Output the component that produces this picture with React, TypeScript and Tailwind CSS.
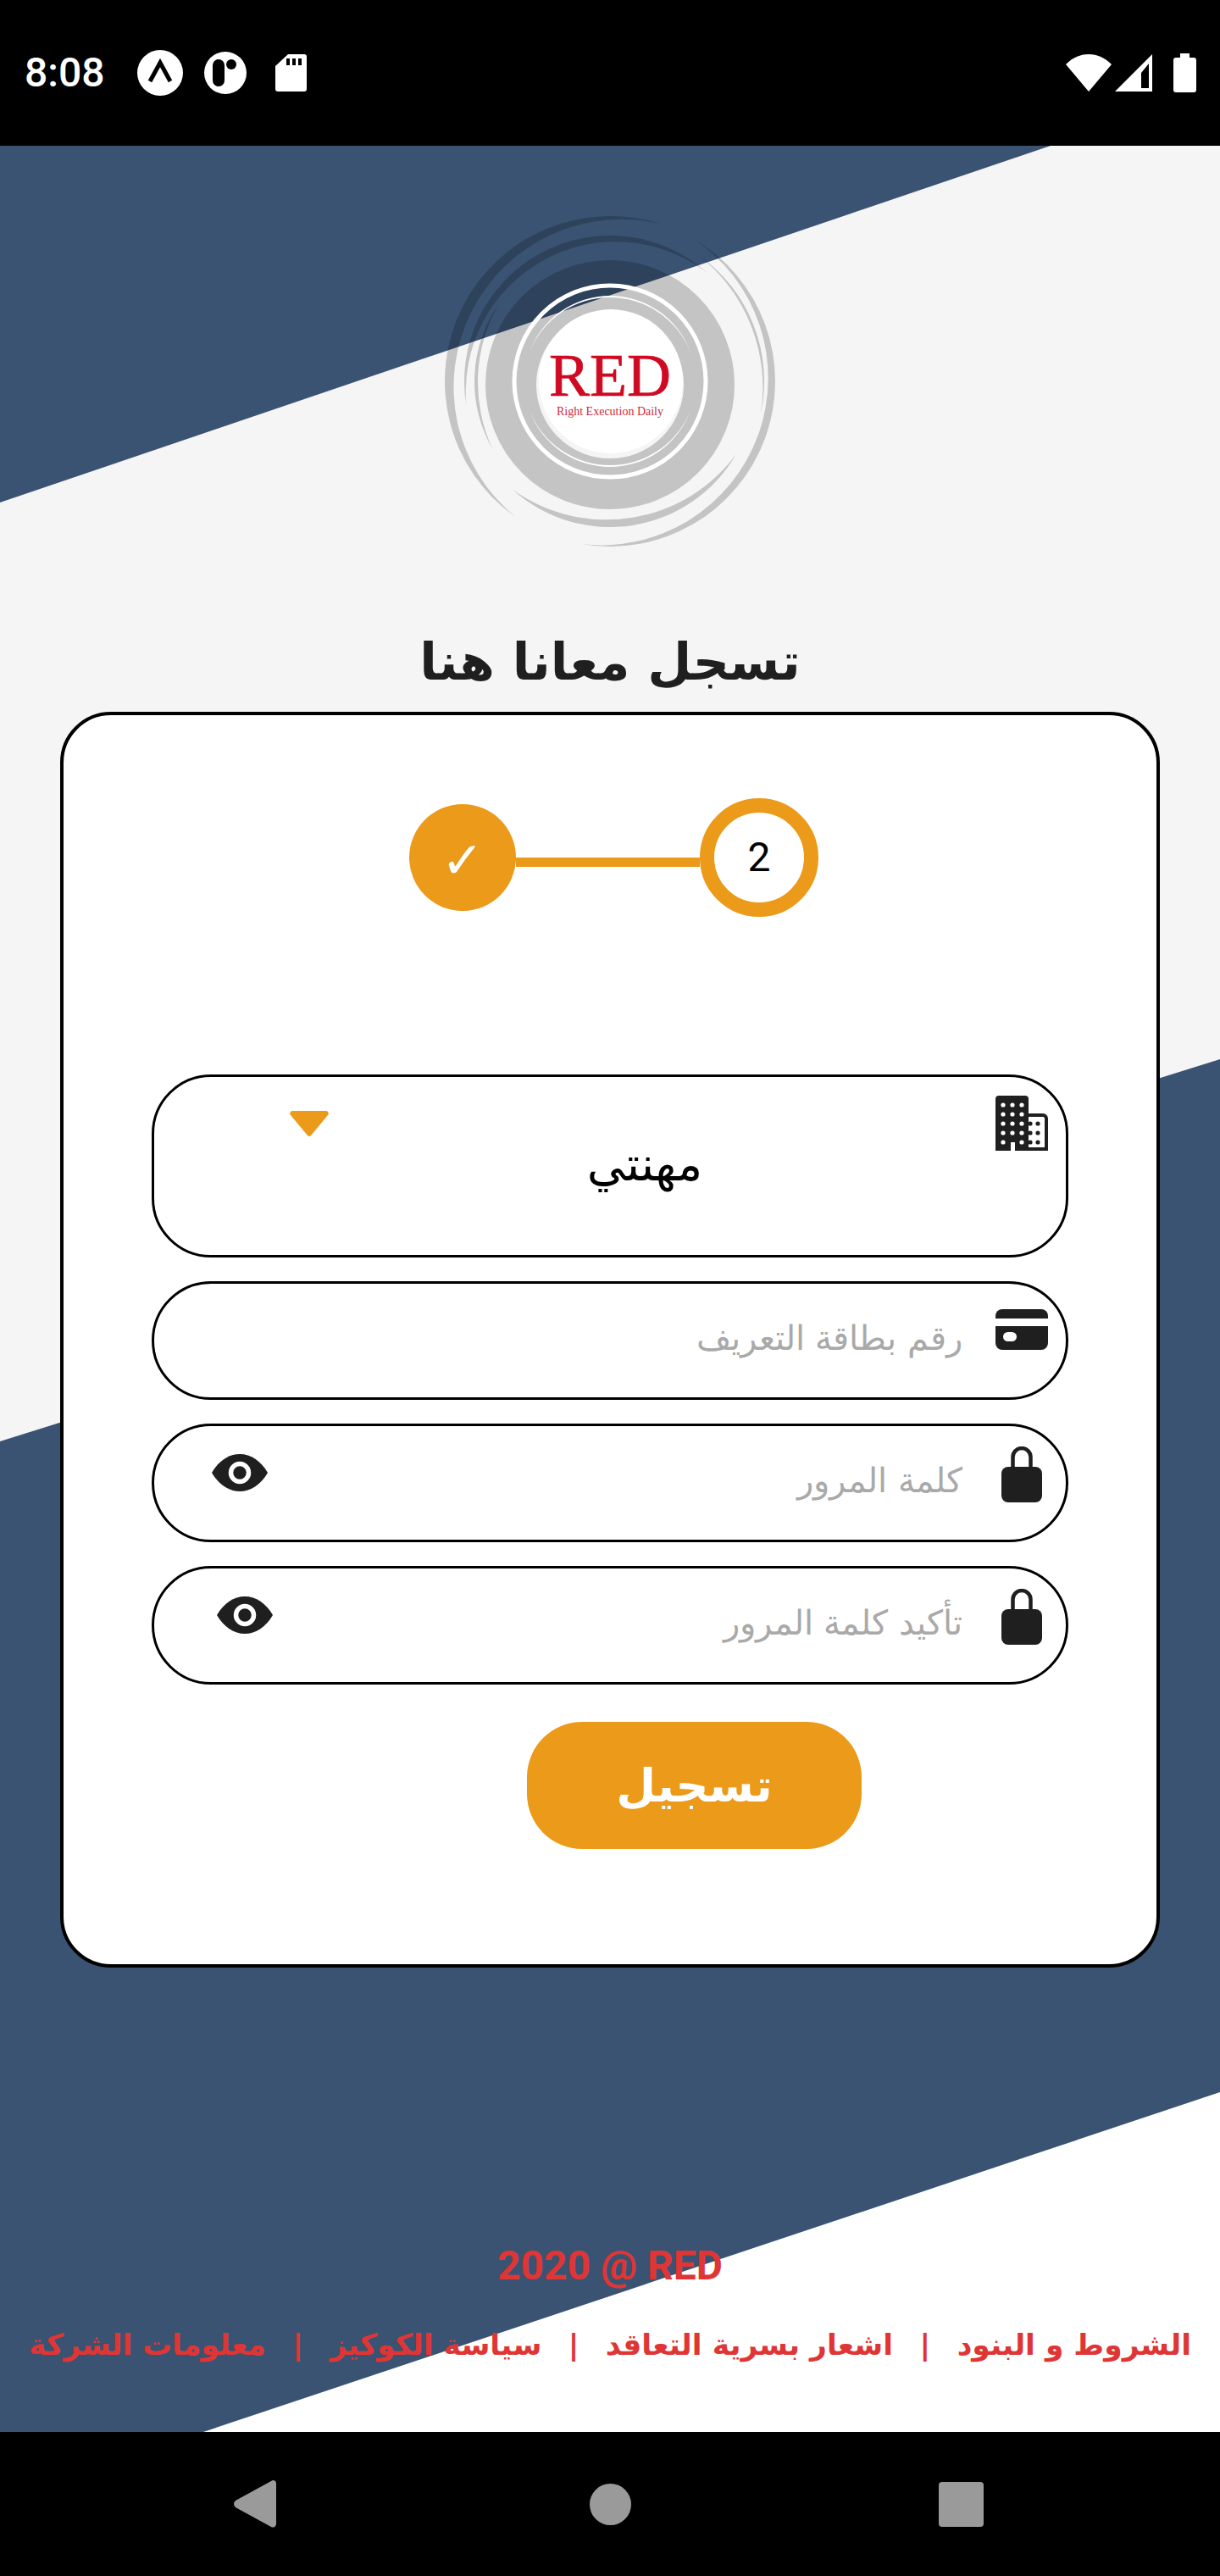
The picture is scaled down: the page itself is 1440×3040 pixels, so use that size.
import React from "react";

const arabic = "font-['DejaVu_Sans',sans-serif]";

// tapered swirl: outer arc of radius r, coming back on a flatter arc
function crescent(r: number, from: number, to: number, w: number) {
  const rad = (d: number) => (d * Math.PI) / 180;
  const cx = 200;
  const cy = 200;
  const x0 = cx + r * Math.cos(rad(from));
  const y0 = cy + r * Math.sin(rad(from));
  const x1 = cx + r * Math.cos(rad(to));
  const y1 = cy + r * Math.sin(rad(to));
  const half = rad(to - from) / 2;
  const c = r * Math.abs(Math.sin(half));
  const s = r * (1 - Math.cos(half)) - w;
  const back = (c * c + s * s) / (2 * s);
  const large = to - from > 180 ? 1 : 0;
  const backLarge = s > back ? 1 : 0;
  return `M${x0} ${y0}A${r} ${r} 0 ${large} 1 ${x1} ${y1}A${back} ${back} 0 ${backLarge} 0 ${x0} ${y0}z`;
}

function Logo() {
  const swirls: [number, number, number, number][] = [
    [195, 125, 288, 12],
    [195, 300, 460, 9],
    [172, 30, 132, 9],
    [172, 170, 312, 9],
    [182, 305, 372, 3],
    [160, 150, 215, 4],
  ];
  return (
    <svg width="400" height="400" viewBox="0 0 400 400" className="block shrink-0">
      <g fill="#000" fillOpacity="0.2">
        {swirls.map(([r, a, b, w], i) => (
          <path key={i} d={crescent(r, a, b, w)} />
        ))}
      </g>
      <circle cx="200" cy="204" r="117" fill="none" stroke="#000" strokeOpacity="0.2" strokeWidth="60" />
      <circle cx="200" cy="200" r="113" fill="none" stroke="#fff" strokeWidth="5" />
      <path d={crescent(101, 200, 340, 2)} fill="#fff" />
      <path d={crescent(101, 20, 160, 2)} fill="#fff" />
      <circle cx="201" cy="200" r="85" fill="#fff" />
      <text x="200" y="217" textAnchor="middle" fill="#cf0a22" stroke="#cf0a22" strokeWidth="0.7" fontFamily="'Liberation Serif', serif" fontSize="72">
        RED
      </text>
      <text x="200" y="240" textAnchor="middle" fill="#cf2a40" fontFamily="'Liberation Serif', serif" fontSize="14">
        Right Execution Daily
      </text>
    </svg>
  );
}

function Eye() {
  return (
    <svg width="66" height="44" viewBox="0 0 66 44">
      <path d="M0 22C8 8 20 0 33 0s25 8 33 22c-8 14-20 22-33 22S8 36 0 22z" fill="#1f1f1f" />
      <circle cx="33" cy="22" r="10.5" fill="none" stroke="#fff" strokeWidth="5.5" />
    </svg>
  );
}

function Lock() {
  return (
    <svg width="48" height="66" viewBox="0 0 48 66">
      <path d="M13.5 26V12.500a10.500 10.500 0 0 1 21 0V26" fill="none" stroke="#1f1f1f" strokeWidth="4.500" />
      <rect x="0" y="24" width="48" height="42" rx="8" fill="#1f1f1f" />
    </svg>
  );
}

function Card() {
  return (
    <svg width="62" height="48" viewBox="0 0 62 48">
      <path d="M8 0h46a8 8 0 0 1 8 8v3H0V8a8 8 0 0 1 8-8z" fill="#1f1f1f" />
      <path fillRule="evenodd" d="M0 20h62v20a8 8 0 0 1-8 8H8a8 8 0 0 1-8-8zM14.500 27a5.500 5.500 0 0 0 0 11h5a5.500 5.500 0 0 0 0-11z" fill="#1f1f1f" />
    </svg>
  );
}

function Building() {
  const dots: [number, number][] = [];
  for (const y of [11, 22, 33, 44, 55]) {
    for (const x of [9, 20, 31]) {
      if (!(y === 55 && x === 20)) dots.push([x, y]);
    }
  }
  const small: [number, number][] = [];
  for (const y of [33, 44, 55]) {
    for (const x of [41, 50]) small.push([x, y]);
  }
  return (
    <svg width="62" height="66" viewBox="0 0 62 66">
      <path d="M4 0h31a4 4 0 0 1 4 4v61H23V55h-5v10H0V4a4 4 0 0 1 4-4z" fill="#1f1f1f" />
      <path d="M39 23h17a4 4 0 0 1 4 4v36H39" fill="#fff" stroke="#1f1f1f" strokeWidth="4" />
      {dots.map(([x, y]) => (
        <circle key={`${x}-${y}`} cx={x} cy={y} r="2.6" fill="#fff" />
      ))}
      {small.map(([x, y]) => (
        <circle key={`${x}-${y}`} cx={x} cy={y} r="2.6" fill="#1f1f1f" />
      ))}
    </svg>
  );
}

function Field({ label, icon, iconTop, eye }: { label: string; icon: React.ReactNode; iconTop: string; eye?: string }) {
  return (
    <div className="flex h-[140px] w-full items-start justify-between rounded-[70px] border-[3px] border-black bg-white pr-[20px]">
      <div className={eye}>{eye ? <Eye /> : null}</div>
      <div className="flex items-start gap-[38px]">
        <span className={`${arabic} mt-[34px] text-[40px] font-light leading-[60px] text-[#a9a9a9]`} dir="rtl">
          {label}
        </span>
        <div className={`flex w-[64px] justify-center ${iconTop}`}>{icon}</div>
      </div>
    </div>
  );
}

export default function App() {
  return (
    <div className="flex h-[3040px] w-[1440px] flex-col overflow-hidden bg-black">
      <div className="flex h-[172px] shrink-0 items-center justify-between pl-[29px] pr-[28px] text-white">
        <div className="flex items-center">
          <span className="font-['Roboto',sans-serif] text-[48px] font-medium">8:08</span>
          <svg width="54" height="54" viewBox="0 0 54 54" className="ml-[38px]">
            <circle cx="27" cy="27" r="27" fill="#fff" />
            <path d="M15 37l12-22 12 22" fill="none" stroke="#000" strokeWidth="5" />
          </svg>
          <svg width="50" height="50" viewBox="0 0 50 50" className="ml-[25px]">
            <circle cx="25" cy="25" r="25" fill="#fff" />
            <rect x="10" y="9" width="14" height="32" rx="7" fill="#000" />
            <circle cx="32" cy="15" r="6" fill="#000" />
          </svg>
          <svg width="37" height="44" viewBox="0 0 37 44" className="ml-[34px]">
            <path d="M15 0h19a3 3 0 0 1 3 3v38a3 3 0 0 1-3 3H3a3 3 0 0 1-3-3V14z" fill="#fff" />
            <path d="M13 5h4v8h-4zM20 5h4v8h-4zM27 5h4v8h-4z" fill="#000" />
          </svg>
        </div>
        <div className="flex items-center">
          <svg width="54" height="44" viewBox="0 0 54 44">
            <path d="M0 12C8 4 17 0 27 0s19 4 27 12L27 44z" fill="#fff" />
          </svg>
          <svg width="44" height="44" viewBox="0 0 44 44" className="ml-[4px]">
            <path fillRule="evenodd" d="M44 0v44H0zM40 11L31 22v18h9z" fill="#fff" />
          </svg>
          <svg width="27" height="46" viewBox="0 0 27 46" className="ml-[25px]">
            <path d="M8 0h11v5h5a3 3 0 0 1 3 3v35a3 3 0 0 1-3 3H3a3 3 0 0 1-3-3V8a3 3 0 0 1 3-3h5z" fill="#fff" />
          </svg>
        </div>
      </div>

      <div className="relative flex h-[2698px] shrink-0 flex-col items-center bg-white pt-[78px]">
        {/* background bands */}
        <svg width="1440" height="2698" viewBox="0 0 1440 2698" className="absolute inset-0">
          <rect width="1440" height="2698" fill="#fff" />
          <path d="M0 0H1440V1078L0 1529z" fill="#f5f5f5" />
          <path d="M0 0H1240L0 421z" fill="#3a5372" />
          <path d="M0 1529L1440 1078V2297L240 2698H0z" fill="#3a5372" />
        </svg>

        <div className="relative flex flex-col items-center">
          <Logo />
          <h1 className={`${arabic} mt-[72px] h-[118px] text-[60px] font-bold leading-[118px] text-[#1f1f1f]`} dir="rtl">
            تسجل معانا هنا
          </h1>
        </div>

        <div className="relative h-[1482px] w-[1298px] rounded-[60px] border-[4px] border-black bg-white px-[104px] pt-[98px]">
          <div className="ml-[303px] flex items-center">
            <div className="ml-[1px] flex h-[126px] w-[126px] items-center justify-center rounded-full bg-[#ec9a19] text-[60px] leading-none text-white">
              <span className="pt-[5px] font-['DejaVu_Sans',sans-serif]">✓</span>
            </div>
            <div className="mt-[11px] h-[11px] w-[217px] bg-[#ec9a19]" />
            <div className="flex h-[140px] w-[140px] items-center justify-center rounded-full border-[17px] border-[#ec9a19] bg-white font-['Roboto',sans-serif] text-[48px] text-black">
              2
            </div>
          </div>

          <div className="mt-[186px] flex h-[216px] items-start justify-between rounded-[70px] border-[3px] border-black bg-white pl-[160px] pr-[20px]">
            <svg width="46" height="30" viewBox="0 0 46 30" className="mt-[40px]">
              <path d="M3 0h40a3 3 0 0 1 2 5L25 29a3 3 0 0 1-4 0L1 5a3 3 0 0 1 2-5z" fill="#ec9a19" />
            </svg>
            <span className={`${arabic} mr-[40px] mt-[68px] text-[56px] leading-[70px] text-black`} dir="rtl">
              مهنتي
            </span>
            <div className="flex w-[64px] justify-center pt-[22px]">
              <Building />
            </div>
          </div>

          <div className="mt-[28px] flex flex-col gap-[28px]">
            <Field label="رقم بطاقة التعريف" icon={<Card />} iconTop="pt-[30px]" />
            <Field label="كلمة المرور" icon={<Lock />} iconTop="pt-[24px]" eye="mt-[33px] ml-[68px]" />
            <Field label="تأكيد كلمة المرور" icon={<Lock />} iconTop="pt-[24px]" eye="mt-[33px] ml-[74px]" />
          </div>

          <div className={`${arabic} ml-[443px] mt-[44px] flex h-[150px] w-[395px] items-center justify-center rounded-[65px] bg-[#ec9a19] text-[54px] font-bold text-white`} dir="rtl">
            تسجيل
          </div>
        </div>

        <p className="relative mt-[317px] font-['Roboto',sans-serif] text-[48px] font-bold leading-[70px] text-[#e03535]">
          2020 @ RED
        </p>
        <div className={`${arabic} relative mt-[28px] flex w-full items-center justify-between whitespace-nowrap px-[34px] text-[34.500px] font-bold leading-[60px] text-[#e03535]`} dir="rtl">
          <span>الشروط و البنود</span>
          <span>|</span>
          <span>اشعار بسرية التعاقد</span>
          <span>|</span>
          <span>سياسة الكوكيز</span>
          <span>|</span>
          <span>معلومات الشركة</span>
        </div>
      </div>

      <div className="flex h-[170px] shrink-0 items-center pl-[276px]">
        <svg width="50" height="56" viewBox="0 0 50 56">
          <path d="M46 0a4 4 0 0 1 4 4v48a4 4 0 0 1-6 3L2 32a5 5 0 0 1 0-8L44 1z" fill="#9a9a9a" />
        </svg>
        <div className="ml-[370px] h-[49px] w-[49px] rounded-full bg-[#9a9a9a]" />
        <div className="ml-[363px] h-[53px] w-[53px] rounded-[4px] bg-[#9a9a9a]" />
      </div>
    </div>
  );
}
